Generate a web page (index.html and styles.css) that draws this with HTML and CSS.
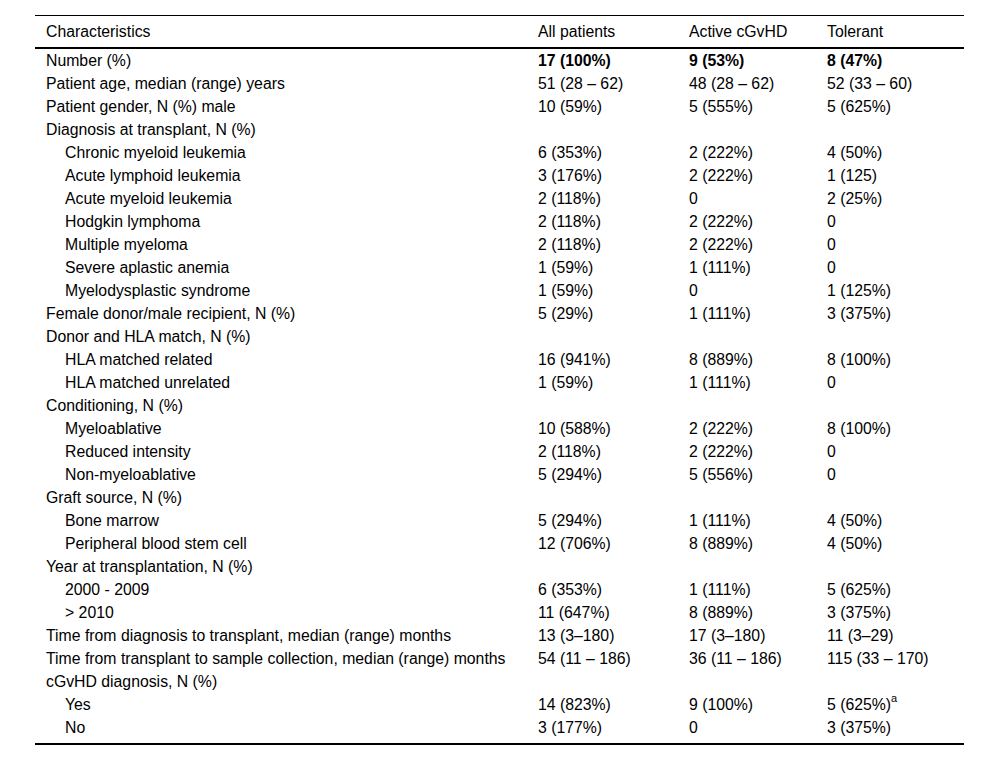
FILE: index.html
```html
<!DOCTYPE html>
<html>
<head>
<meta charset="utf-8">
<link rel="stylesheet" href="styles.css">
</head>
<body>
<div class="wrap">
<table class="tbl">
<colgroup><col class="c1"><col class="c2"><col class="c3"><col class="c4"></colgroup>
<thead>
<tr><th>Characteristics</th><th>All patients</th><th>Active cGvHD</th><th>Tolerant</th></tr>
</thead>
<tbody>
<tr><td>Number (%)</td><td><b>17 (100%)</b></td><td><b>9 (53%)</b></td><td><b>8 (47%)</b></td></tr>
<tr><td>Patient age, median (range) years</td><td>51 (28 – 62)</td><td>48 (28 – 62)</td><td>52 (33 – 60)</td></tr>
<tr><td>Patient gender, N (%) male</td><td>10 (59%)</td><td>5 (555%)</td><td>5 (625%)</td></tr>
<tr><td>Diagnosis at transplant, N (%)</td><td></td><td></td><td></td></tr>
<tr><td class="ind">Chronic myeloid leukemia</td><td>6 (353%)</td><td>2 (222%)</td><td>4 (50%)</td></tr>
<tr><td class="ind">Acute lymphoid leukemia</td><td>3 (176%)</td><td>2 (222%)</td><td>1 (125)</td></tr>
<tr><td class="ind">Acute myeloid leukemia</td><td>2 (118%)</td><td>0</td><td>2 (25%)</td></tr>
<tr><td class="ind">Hodgkin lymphoma</td><td>2 (118%)</td><td>2 (222%)</td><td>0</td></tr>
<tr><td class="ind">Multiple myeloma</td><td>2 (118%)</td><td>2 (222%)</td><td>0</td></tr>
<tr><td class="ind">Severe aplastic anemia</td><td>1 (59%)</td><td>1 (111%)</td><td>0</td></tr>
<tr><td class="ind">Myelodysplastic syndrome</td><td>1 (59%)</td><td>0</td><td>1 (125%)</td></tr>
<tr><td>Female donor/male recipient, N (%)</td><td>5 (29%)</td><td>1 (111%)</td><td>3 (375%)</td></tr>
<tr><td>Donor and HLA match, N (%)</td><td></td><td></td><td></td></tr>
<tr><td class="ind">HLA matched related</td><td>16 (941%)</td><td>8 (889%)</td><td>8 (100%)</td></tr>
<tr><td class="ind">HLA matched unrelated</td><td>1 (59%)</td><td>1 (111%)</td><td>0</td></tr>
<tr><td>Conditioning, N (%)</td><td></td><td></td><td></td></tr>
<tr><td class="ind">Myeloablative</td><td>10 (588%)</td><td>2 (222%)</td><td>8 (100%)</td></tr>
<tr><td class="ind">Reduced intensity</td><td>2 (118%)</td><td>2 (222%)</td><td>0</td></tr>
<tr><td class="ind">Non-myeloablative</td><td>5 (294%)</td><td>5 (556%)</td><td>0</td></tr>
<tr><td>Graft source, N (%)</td><td></td><td></td><td></td></tr>
<tr><td class="ind">Bone marrow</td><td>5 (294%)</td><td>1 (111%)</td><td>4 (50%)</td></tr>
<tr><td class="ind">Peripheral blood stem cell</td><td>12 (706%)</td><td>8 (889%)</td><td>4 (50%)</td></tr>
<tr><td>Year at transplantation, N (%)</td><td></td><td></td><td></td></tr>
<tr><td class="ind">2000 - 2009</td><td>6 (353%)</td><td>1 (111%)</td><td>5 (625%)</td></tr>
<tr><td class="ind">&gt; 2010</td><td>11 (647%)</td><td>8 (889%)</td><td>3 (375%)</td></tr>
<tr><td>Time from diagnosis to transplant, median (range) months</td><td>13 (3–180)</td><td>17 (3–180)</td><td>11 (3–29)</td></tr>
<tr><td>Time from transplant to sample collection, median (range) months</td><td>54 (11 – 186)</td><td>36 (11 – 186)</td><td>115 (33 – 170)</td></tr>
<tr><td>cGvHD diagnosis, N (%)</td><td></td><td></td><td></td></tr>
<tr><td class="ind">Yes</td><td>14 (823%)</td><td>9 (100%)</td><td>5 (625%)<sup class="sup">a</sup></td></tr>
<tr class="last"><td class="ind">No</td><td>3 (177%)</td><td>0</td><td>3 (375%)</td></tr>
</tbody>
</table>
</div>
</body>
</html>
```

FILE: styles.css
```css
html, body {
  margin: 0;
  padding: 0;
  background: #fff;
}
.wrap {
  padding: 15px 0 0 35px;
}
.tbl {
  width: 929px;
  border-collapse: collapse;
  table-layout: fixed;
  font-family: "Liberation Sans", Arial, sans-serif;
  font-size: 15.8px;
  color: #000;
  border-top: 1px solid #000;
  border-bottom: 2px solid #000;
}
.c1 { width: 492px; }
.c2 { width: 151px; }
.c3 { width: 138px; }
.c4 { width: 148px; }
.tbl th {
  font-weight: normal;
  text-align: left;
  height: 31px;
  padding: 0 0 0 11px;
  border-bottom: 2px solid #000;
  vertical-align: middle;
  line-height: 18px;
}
.tbl td {
  height: 23px;
  padding: 0 0 0 11px;
  vertical-align: middle;
  white-space: nowrap;
  line-height: 18px;
}
.tbl td.ind {
  padding-left: 30px;
}
.tbl tr.last td {
  height: 27px;
  vertical-align: top;
  padding-top: 0;
  line-height: 23px;
}
.tbl b {
  font-weight: bold;
}
.sup {
  font-size: 11px;
  vertical-align: top;
  position: relative;
  top: -3px;
  line-height: 1;
}
```
